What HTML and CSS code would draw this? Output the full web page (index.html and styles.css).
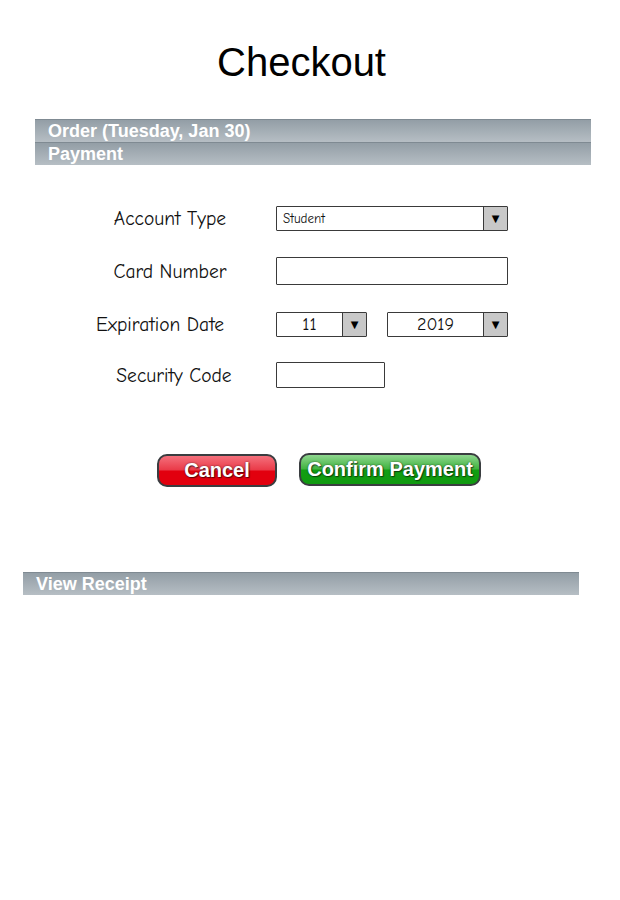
FILE: index.html
```html
<!DOCTYPE html>
<html>
<head>
<meta charset="utf-8">
<link rel="stylesheet" href="styles.css">
</head>
<body>
<div class="page">
  <h1 class="title">Checkout</h1>
  <div class="bars">
    <div class="bar">Order (Tuesday, Jan 30)</div>
    <div class="bar">Payment</div>
  </div>
  <div class="form">
    <div class="row">
      <div class="label">Account Type</div>
      <div class="select select-wide">
        <span class="select-text select-text-left">Student</span>
        <span class="select-btn">&#9660;</span>
      </div>
    </div>
    <div class="row">
      <div class="label">Card Number</div>
      <div class="input input-wide"></div>
    </div>
    <div class="row">
      <div class="label label-exp">Expiration Date</div>
      <div class="select select-month">
        <span class="select-text">11</span>
        <span class="select-btn">&#9660;</span>
      </div>
      <div class="select select-year">
        <span class="select-text">2019</span>
        <span class="select-btn">&#9660;</span>
      </div>
    </div>
    <div class="row">
      <div class="label label-sec">Security Code</div>
      <div class="input input-short"></div>
    </div>
  </div>
  <div class="buttons">
    <div class="btn btn-cancel">Cancel</div>
    <div class="btn btn-confirm">Confirm Payment</div>
  </div>
  <div class="bar bar-receipt">View Receipt</div>
</div>
</body>
</html>
```
FILE: styles.css
```css
html, body {
  margin: 0;
  padding: 0;
  background: #ffffff;
}
.page {
  width: 620px;
  height: 900px;
  font-family: "Liberation Sans", Arial, sans-serif;
}
.title {
  margin: 0;
  padding-top: 39px;
  padding-right: 17px;
  font-size: 40px;
  line-height: 46px;
  font-weight: normal;
  text-align: center;
  color: #000;
}
.bars {
  margin: 34px 29px 0 35px;
}
.bar {
  height: 22px;
  border-top: 1px solid #7f8a92;
  background: linear-gradient(#939ea6, #b6bec4);
  color: #ffffff;
  font-weight: bold;
  font-size: 18px;
  line-height: 23px;
  padding-left: 13px;
  overflow: hidden;
}
.form {
  padding-top: 39px;
  display: flex;
  flex-direction: column;
  gap: 25px;
  font-family: "Comic Sans MS", "Comic Neue", "DejaVu Sans", sans-serif;
}
.row {
  height: 28px;
  display: flex;
  align-items: center;
  gap: 20px;
}
.row:last-child {
  margin-top: -2px;
}
.label {
  width: 180px;
  margin-left: 80px;
  margin-right: -4px;
  text-align: center;
  font-size: 19.5px;
  color: #111;
}
.label-exp {
  padding-right: 20px;
  width: 160px;
}
.label-sec {
  padding-left: 8px;
  width: 172px;
}
.select, .input {
  box-sizing: border-box;
  border: 1px solid #3a3a3a;
  border-radius: 1px;
  background: #fff;
  display: flex;
  height: 25px;
}
.select-wide { width: 232px; }
.select-month { width: 91px; }
.select-year { width: 121px; }
.input-wide { width: 232px; height: 28px; }
.input-short { width: 109px; height: 26px; }
.select-text {
  flex: 1;
  text-align: center;
  font-size: 18px;
  font-weight: normal;
  line-height: 23px;
  color: #111;
}
.select-text-left {
  text-align: left;
  padding-left: 6px;
  font-size: 13px;
}
.select-btn {
  width: 23px;
  border-left: 1px solid #3a3a3a;
  background: #c8c8c8;
  font-family: "DejaVu Sans", sans-serif;
  font-size: 10px;
  font-weight: normal;
  line-height: 23px;
  text-align: center;
  color: #000;
}
.buttons {
  display: flex;
  gap: 22px;
  padding-left: 157px;
  margin-top: 65px;
}
.btn {
  box-sizing: border-box;
  height: 33px;
  border: 2px solid #3a3d40;
  border-radius: 10px;
  color: #fff;
  font-weight: bold;
  font-size: 20px;
  line-height: 28px;
  text-align: center;
  text-shadow: 0 0 2px rgba(0,0,0,0.6), 1px 1px 1px rgba(0,0,0,0.5);
}
.btn-cancel {
  width: 120px;
  background: linear-gradient(#f4707c 0%, #ea3a48 48%, #e2000e 52%, #e2000e 100%);
}
.btn-confirm {
  width: 182px;
  margin-top: -1px;
  background: linear-gradient(#8fd68f 0%, #3fb43f 48%, #129e12 52%, #109a10 100%);
}
.bar-receipt {
  margin: 85px 41px 0 23px;
}
```
